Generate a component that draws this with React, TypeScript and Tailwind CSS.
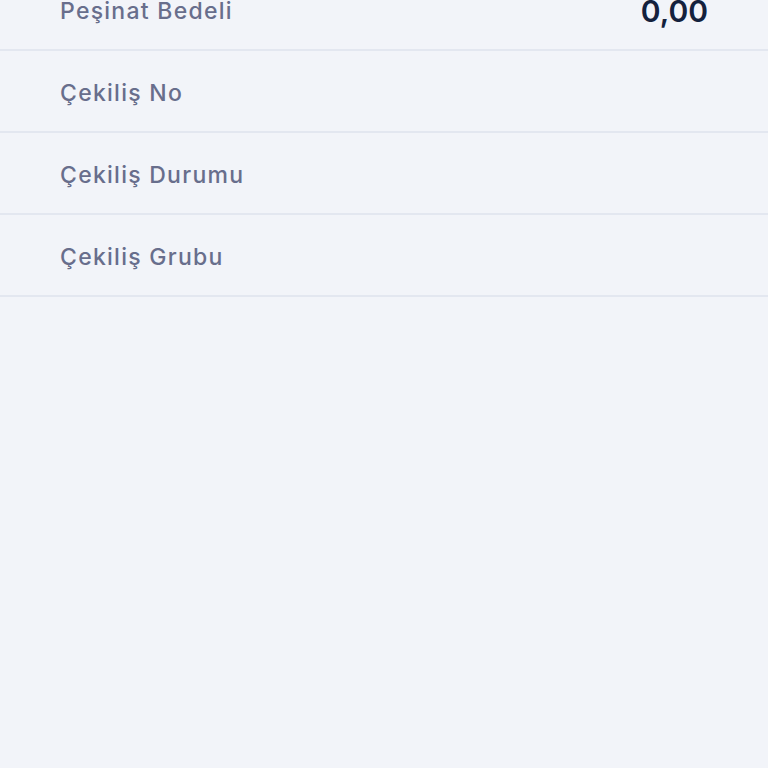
const rows: Array<{ label: string; value?: string }> = [
  { label: "Peşinat Bedeli", value: "0,00" },
  { label: "Çekiliş No" },
  { label: "Çekiliş Durumu" },
  { label: "Çekiliş Grubu" },
];

export default function App() {
  return (
    <main className="h-[768px] overflow-hidden bg-[#f2f4f9] font-['Inter',sans-serif]">
      <ul className="-mt-[31px]">
        {rows.map((row) => (
          <li
            key={row.label}
            className="flex h-[82px] items-center justify-between border-b-2 border-[#e3e7f0] px-[60px] pt-[4px]"
          >
            <span className="text-[23px] font-medium tracking-[0.055em] text-[#686e8c]">{row.label}</span>
            {row.value ? (
              <span className="text-[30px] font-semibold leading-none text-[#14213d]">{row.value}</span>
            ) : null}
          </li>
        ))}
      </ul>
    </main>
  );
}
